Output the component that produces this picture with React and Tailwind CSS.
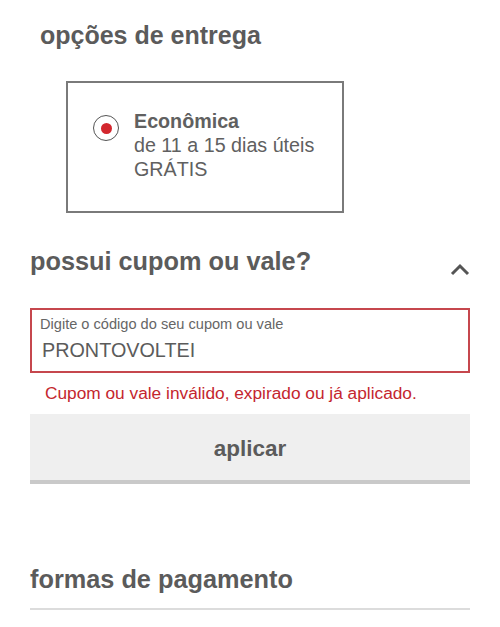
export default function App() {
  return (
    <div className="min-h-[627px] bg-white px-[30px] font-['Liberation_Sans',Arial,sans-serif] text-[#5b5b5b]">
      {/* opções de entrega */}
      <h2 className="ml-[10px] pt-[20px] text-[25px] font-bold leading-[30px]">opções de entrega</h2>

      <div className="ml-[36px] mt-[31px] flex h-[132px] w-[278px] items-start gap-[15px] border-2 border-[#7a7a7a] pl-[25px] pt-[26px]">
        <div className="mt-[6px] flex h-[26px] w-[26px] shrink-0 items-center justify-center rounded-full border-[1.5px] border-[#555]">
          <div className="h-[11px] w-[11px] rounded-full bg-[#d3272e]" />
        </div>
        <div className="text-[19.7px] leading-[24px] text-[#606060]">
          <p className="font-bold">Econômica</p>
          <p>de 11 a 15 dias úteis</p>
          <p>GRÁTIS</p>
        </div>
      </div>

      {/* cupom */}
      <div className="mt-[33px] flex items-start justify-between">
        <h2 className="text-[25.3px] font-bold leading-[30px]">possui cupom ou vale?</h2>
        <svg width="22" height="14" viewBox="0 0 22 14" className="-mr-[1px] mt-[16px]">
          <path d="M3 12 L11 4 L19 12" fill="none" stroke="#555" strokeWidth="3" />
        </svg>
      </div>

      <div className="mt-[32px] h-[65px] border-2 border-[#c6474d] px-[8px] pt-[6px]">
        <p className="text-[14.6px] leading-[17px] text-[#666]">Digite o código do seu cupom ou vale</p>
        <p className="ml-[2px] mt-[5px] text-[19.8px] leading-[24px] text-[#5b5b5b]">PRONTOVOLTEI</p>
      </div>

      <p className="ml-[15px] mt-[10px] text-[17.3px] leading-[20px] text-[#c4262e]">
        Cupom ou vale inválido, expirado ou já aplicado.
      </p>

      <button className="mt-[11px] flex h-[70px] w-full items-center justify-center border-b-4 border-[#c9c9c9] bg-[#efefef] pt-[3px] text-[22.5px] font-bold text-[#5b5b5b]">
        aplicar
      </button>

      {/* pagamento */}
      <h2 className="mt-[80px] text-[25.3px] font-bold leading-[30px]">formas de pagamento</h2>
      <div className="mt-[14px] h-[2px] bg-[#dcdcdc]" />
    </div>
  );
}
